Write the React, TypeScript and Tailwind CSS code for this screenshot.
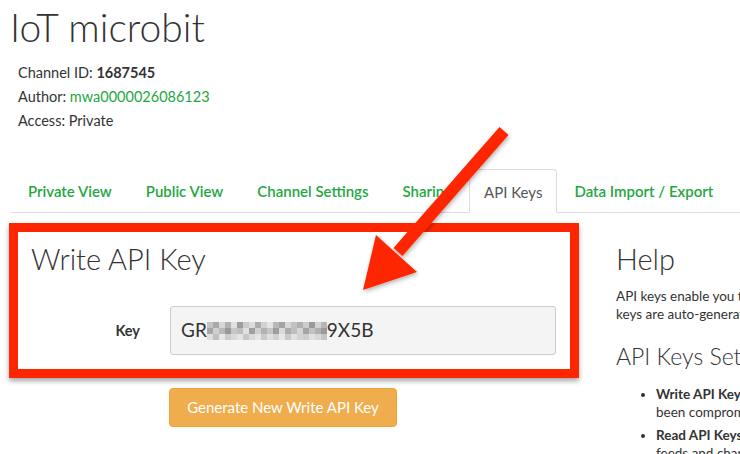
import React from "react";

const tabs = [
  "Private View",
  "Public View",
  "Channel Settings",
  "Sharing",
  "API Keys",
  "Data Import / Export",
];

// pixelated part of the key, three rows of grey blocks
const blur = [
  ["#c4c4c4", "#a9a9a9", "#d6d6d6", "#b3b3b3", "#e0e0e0", "#9e9e9e", "#cbcbcb", "#dcdcdc", "#acacac", "#d2d2d2", "#e4e4e4", "#b8b8b8", "#a3a3a3", "#d8d8d8", "#c2c2c2", "#b0b0b0", "#cdcdcd", "#9a9a9a", "#d4d4d4", "#b6b6b6"],
  ["#a6a6a6", "#cfcfcf", "#b9b9b9", "#989898", "#c8c8c8", "#bdbdbd", "#e1e1e1", "#a0a0a0", "#d0d0d0", "#b2b2b2", "#c6c6c6", "#9d9d9d", "#dadada", "#acacac", "#bfbfbf", "#d5d5d5", "#a4a4a4", "#c3c3c3", "#b1b1b1", "#9b9b9b"],
  ["#dedede", "#c0c0c0", "#e6e6e6", "#cccccc", "#d9d9d9", "#e3e3e3", "#c7c7c7", "#dbdbdb", "#e5e5e5", "#cacaca", "#dfdfdf", "#d1d1d1", "#e7e7e7", "#c9c9c9", "#e2e2e2", "#d3d3d3", "#cecece", "#e0e0e0", "#d7d7d7", "#c5c5c5"],
];

function Arrow() {
  return (
    <svg
      className="pointer-events-none absolute left-0 top-0"
      width="740"
      height="454"
      viewBox="0 0 740 454"
    >
      <defs>
        <filter id="sh" x="-20%" y="-20%" width="140%" height="140%">
          <feDropShadow dx="1" dy="2" stdDeviation="2" floodColor="#000" floodOpacity="0.3" />
        </filter>
      </defs>
      <g filter="url(#sh)" fill="#fe2600">
        <line x1="504" y1="131" x2="398" y2="252" stroke="#fe2600" strokeWidth="12" />
        <polygon points="363,290 376,235 417,272" />
      </g>
    </svg>
  );
}

export default function App() {
  return (
    <div className="relative h-[454px] w-[740px] overflow-hidden bg-white font-['Lato',sans-serif] text-[#333]">
      <h1 className="ml-[10px] mt-[4px] text-[39px] font-light leading-[46px] text-[#333]">IoT microbit</h1>

      <div className="ml-[18px] mt-[13px] space-y-[4px] text-[14.5px] leading-[20px]">
        <p>
          Channel ID: <span className="font-bold">1687545</span>
        </p>
        <p>
          Author: <span className="text-[#22a83f]">mwa0000026086123</span>
        </p>
        <p>Access: Private</p>
      </div>

      <ul className="ml-[11px] mt-[38px] flex border-b border-[#dddddd]">
        {tabs.map((t) => {
          const active = t === "API Keys";
          return (
            <li
              key={t}
              className={
                active
                  ? "-mb-px flex h-[44px] items-center rounded-t-[4px] border border-b-white border-[#dddddd] px-[14px] pt-[2px] text-[15px] text-[#555]"
                  : "flex h-[43px] items-center px-[17px] pt-[2px] text-[15px] font-semibold text-[#22a83f]"
              }
            >
              {t}
            </li>
          );
        })}
      </ul>

      <div className="mt-[10px] flex">
        <div className="ml-[9px] w-[570px] shrink-0">
          <div className="border-[9px] border-[#fe2600] bg-white px-[13px] pb-[14px] pt-[9px] shadow-[0_3px_5px_rgba(0,0,0,0.35)]">
            <h2 className="text-[29px] font-light leading-[35px] text-[#333]">Write API Key</h2>
            <div className="mt-[30px] flex items-center">
              <label className="w-[139px] pr-[30px] text-right text-[14.5px] font-bold">Key</label>
              <div className="flex h-[49px] w-[386px] items-center rounded-[3px] border border-[#cccccc] bg-[#f4f4f4] px-[10px] text-[19px] text-[#333]">
                <span>GR</span>
                <span className="flex flex-col">
                  {blur.map((row, r) => (
                    <span key={r} className="flex h-[6px]">
                      {row.map((c, i) => (
                        <span key={i} className="h-full w-[6px]" style={{ backgroundColor: c }} />
                      ))}
                    </span>
                  ))}
                </span>
                <span>9X5B</span>
              </div>
            </div>
          </div>
          <button className="ml-[160px] mt-[10px] h-[39px] w-[228px] rounded-[4px] border border-[#eea236] bg-[#f0ad4e] text-[15px] text-white">
            Generate New Write API Key
          </button>
        </div>

        <div className="ml-[37px] mt-[18px] min-w-0 flex-1 whitespace-nowrap">
          <h2 className="text-[29px] font-light leading-[35px] text-[#333]">Help</h2>
          <p className="mt-[11px] text-[13.5px] leading-[18px]">
            API keys enable you to write data to a channel or read data from a private channel. API
            <br />
            keys are auto-generated when you create a new channel.
          </p>
          <h3 className="mt-[19px] text-[23px] font-light leading-[28px]">API Keys Settings</h3>
          <ul className="mt-[15px] list-disc pl-[40px] text-[13.5px] leading-[18px]">
            <li>
              <span className="font-bold">Write API Key</span>: Use this key to write data to a channel. If you feel your key has
              <br />
              been compromised, click Generate New Write API Key.
            </li>
            <li className="mt-[5px]">
              <span className="font-bold">Read API Keys</span>: Use this key to allow other people to view your private channel
              <br />
              feeds and charts.
            </li>
          </ul>
        </div>
      </div>

      <Arrow />
    </div>
  );
}
